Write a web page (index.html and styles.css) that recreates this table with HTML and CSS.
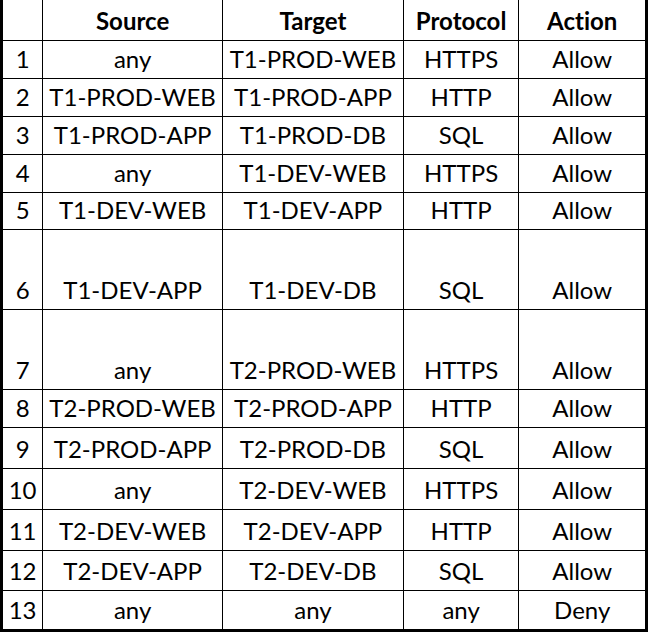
FILE: index.html
```html
<!DOCTYPE html>
<html>
<head>
<meta charset="utf-8">
<link rel="stylesheet" href="styles.css">
</head>
<body>
<table class="rules">
  <colgroup>
    <col class="c-num">
    <col class="c-src">
    <col class="c-tgt">
    <col class="c-proto">
    <col class="c-act">
  </colgroup>
  <thead>
    <tr class="h40">
      <th></th><th>Source</th><th>Target</th><th>Protocol</th><th>Action</th>
    </tr>
  </thead>
  <tbody>
    <tr class="h38"><td>1</td><td>any</td><td>T1-PROD-WEB</td><td>HTTPS</td><td>Allow</td></tr>
    <tr class="h38"><td>2</td><td>T1-PROD-WEB</td><td>T1-PROD-APP</td><td>HTTP</td><td>Allow</td></tr>
    <tr class="h38"><td>3</td><td>T1-PROD-APP</td><td>T1-PROD-DB</td><td>SQL</td><td>Allow</td></tr>
    <tr class="h38"><td>4</td><td>any</td><td>T1-DEV-WEB</td><td>HTTPS</td><td>Allow</td></tr>
    <tr class="h37"><td>5</td><td>T1-DEV-WEB</td><td>T1-DEV-APP</td><td>HTTP</td><td>Allow</td></tr>
    <tr class="h80"><td>6</td><td>T1-DEV-APP</td><td>T1-DEV-DB</td><td>SQL</td><td>Allow</td></tr>
    <tr class="h80"><td>7</td><td>any</td><td>T2-PROD-WEB</td><td>HTTPS</td><td>Allow</td></tr>
    <tr class="h38"><td>8</td><td>T2-PROD-WEB</td><td>T2-PROD-APP</td><td>HTTP</td><td>Allow</td></tr>
    <tr class="h41"><td>9</td><td>T2-PROD-APP</td><td>T2-PROD-DB</td><td>SQL</td><td>Allow</td></tr>
    <tr class="h41"><td>10</td><td>any</td><td>T2-DEV-WEB</td><td>HTTPS</td><td>Allow</td></tr>
    <tr class="h41"><td>11</td><td>T2-DEV-WEB</td><td>T2-DEV-APP</td><td>HTTP</td><td>Allow</td></tr>
    <tr class="h40"><td>12</td><td>T2-DEV-APP</td><td>T2-DEV-DB</td><td>SQL</td><td>Allow</td></tr>
    <tr class="h40"><td>13</td><td>any</td><td>any</td><td>any</td><td>Deny</td></tr>
  </tbody>
</table>
</body>
</html>
```

FILE: styles.css
```css
html, body {
  margin: 0;
  padding: 0;
  background: #fff;
}

.rules {
  border-collapse: collapse;
  table-layout: fixed;
  width: 648px;
  font-family: Lato, "Open Sans", sans-serif;
  font-size: 24px;
  font-variant-ligatures: none;
  color: #000;
  border-left: 3px solid #000;
  border-right: 3px solid #000;
  border-bottom: 3px solid #000;
}

.c-num { width: 41px; }
.c-src { width: 179px; }
.c-tgt { width: 180px; }
.c-proto { width: 115px; }
.c-act { width: 127px; }

.rules th,
.rules td {
  border: 1px solid #000;
  padding: 0 0 5px 0;
  text-align: center;
  vertical-align: bottom;
  line-height: 28px;
  white-space: nowrap;
}

.rules th {
  font-weight: 700;
  border-top: 0;
}

.h40 { height: 40px; }
.h38 { height: 38px; }
.h37 { height: 37px; }
.h41 { height: 41px; }
.h80 { height: 80px; }
```
